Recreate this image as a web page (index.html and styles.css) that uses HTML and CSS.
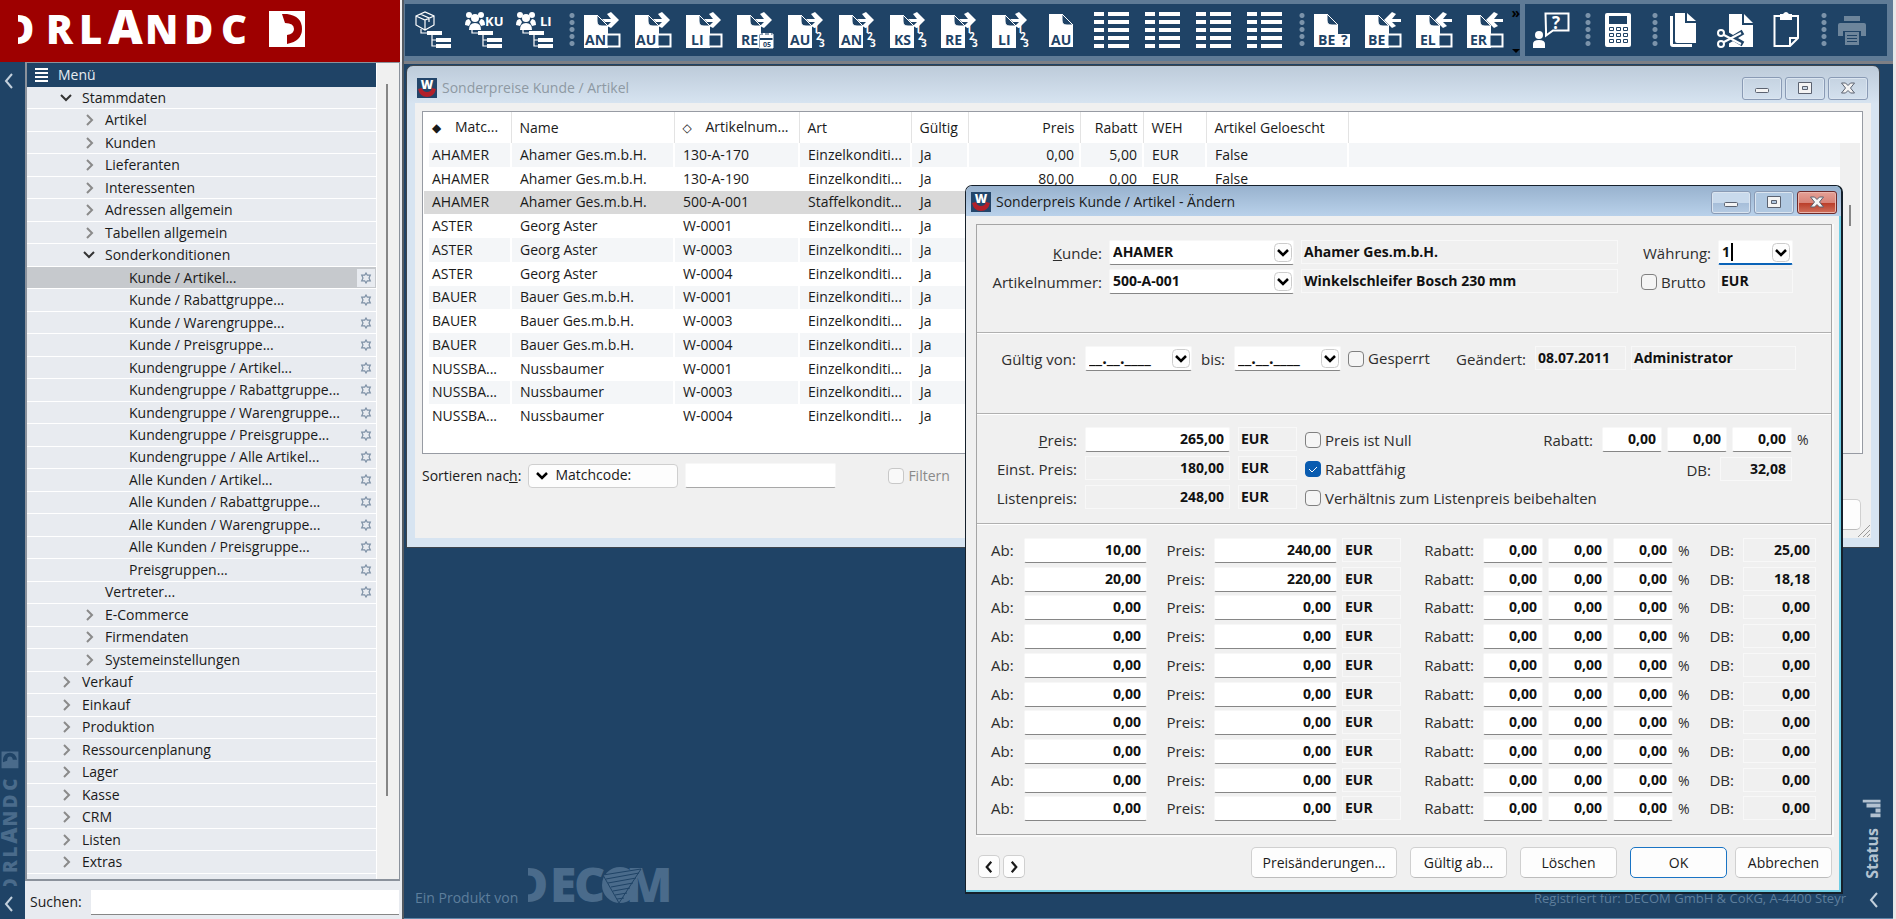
FILE: index.html
```
<!DOCTYPE html>
<html lang="de">
<head>
    <meta charset="UTF-8">
    <meta name="viewport" content="width=device-width, initial-scale=1.0">
    <title>Orlando - Sonderpreise Kunde / Artikel</title>
    <link rel="stylesheet" href="styles.css">
</head>
<body>
    <!-- shared icons -->
    <svg class="defs" aria-hidden="true">
        <clipPath id="cut-o"><path d="M0 0h30v40H0z" /></clipPath>
        <symbol id="i-logo" viewBox="0 0 290 40">
            <text class="logo-text" x="-13" y="36" clip-path="url(#cut-o)">D</text>
            <text class="logo-text" x="28" y="36">R</text>
            <text class="logo-text" x="61" y="36">L</text>
            <text class="logo-text logo-a" x="90" y="36">A</text>
            <text class="logo-text" x="127" y="36">N</text>
            <text class="logo-text" x="166" y="36">D</text>
            <text class="logo-text" x="203" y="36">C</text>
            <path fill-rule="evenodd" d="M251 3h36v36h-36z M264 6h5q15 2 15 15 0 12-15 15v-9q7-1 7-6 0-6-9-6z" />
        </symbol>
        <symbol id="i-down" viewBox="0 0 12 12"><path class="line" d="M1 3l5 5 5-5" /></symbol>
        <symbol id="i-right" viewBox="0 0 12 12"><path class="line" d="M4 1l5 5-5 5" /></symbol>
        <symbol id="i-left" viewBox="0 0 12 16"><path class="line" d="M9 1L3 8l6 7" /></symbol>
        <symbol id="i-gear" viewBox="0 0 12 12"><path class="line thin" d="M6 1l1.3 2.2h3L9 6l1.3 2.8h-3L6 11 4.700 8.800h-3L3 6 1.700 3.200h3z" /></symbol>
        <symbol id="i-app" viewBox="0 0 20 20">
            <path fill="#23456a" d="M0 0h20v20H0z" />
            <path fill="#b3202a" d="M1 11q2 8 9 8t9-8l-4-1q-1 4-5 4t-5-4z" />
            <text x="10" y="11" class="app-w">W</text>
        </symbol>
        <symbol id="i-page" viewBox="0 0 38 38"><path d="M1 4h13v6q0 5 5 5h6v22H1z" /><path d="M14 4l11 11h-6q-5 0-5-5z" class="fold" /></symbol>
        <symbol id="i-out" viewBox="0 0 38 38"><path d="M19 8h9L24 3l4-2 8 8-8 8-4-2 4-4h-6z" /></symbol>
        <symbol id="i-in" viewBox="0 0 38 38"><path d="M37 8h-9l4-5-4-2-8 8 8 8 4-2-4-4h9z" /></symbol>
        <symbol id="i-box" viewBox="0 0 38 38"><path class="box" d="M23.500 23.500h13v12h-13z" /></symbol>
        <symbol id="i-123" viewBox="0 0 38 38"><text class="count" x="26 29 32" y="22 29 36">123</text></symbol>
        <symbol id="i-tree" viewBox="0 0 38 38">
            <path d="M13 20h15v4H13zM22 27h15v4H22zM22 33h15v4H22z" />
            <path class="line thin" d="M7 18v4h6M18 24v5h4M18 24v11h4" />
        </symbol>
        <symbol id="i-people" viewBox="0 0 38 38">
            <circle cx="4" cy="4" r="3" /><circle cx="16" cy="4" r="3" /><circle cx="10" cy="7" r="4" />
            <path d="M0 14q0-6 4-6l2 3-2 4zM20 14q0-6-4-6l-2 3 2 4zM4 19q0-7 6-7t6 7z" />
        </symbol>
        <symbol id="i-list" viewBox="0 0 38 38"><path d="M1 1h10v4H1zM15 1h21v4H15zM1 9h10v4H1zM15 9h21v4H15zM1 17h10v4H1zM15 17h21v4H15zM1 25h10v4H1zM15 25h21v4H15zM1 33h10v4H1zM15 33h21v4H15z" /></symbol>
        <symbol id="i-min" viewBox="0 0 16 14"><rect class="glyph" x="1.500" y="7.500" width="13" height="4" rx="1" /></symbol>
        <symbol id="i-max" viewBox="0 0 16 14"><path class="glyph" fill-rule="evenodd" d="M1.500 1.500h13v11h-13zM5.500 5.500v3h5v-3z" /></symbol>
        <symbol id="i-x" viewBox="0 0 16 14"><path class="glyph" d="M1.500 2h4L8 4.500 10.500 2h4L10.500 7l4 5h-4L8 9.500 5.500 12h-4l4-5z" /></symbol>
    </svg>

    <aside class="sidebar">
        <header class="brand"><svg role="img" aria-label="Orlando"><use href="#i-logo" /></svg></header>
        <div class="sidebar-body">
            <div class="rail">
                <button class="rail-btn" aria-label="Einklappen"><svg><use href="#i-left" /></svg></button>
                <svg class="rail-logo" viewBox="0 0 20 140"><use href="#i-logo" x="0" y="0" width="136" height="19" transform="translate(0 137) rotate(-90)" /></svg>
                <button class="rail-btn" aria-label="Einklappen"><svg><use href="#i-left" /></svg></button>
            </div>
            <div class="menu">
                <nav class="tree-box">
                    <div class="tree">
                        <h2 class="tree-title"><svg viewBox="0 0 13 14"><path d="M0 0h13v2H0zM0 4h13v2H0zM0 8h13v2H0zM0 12h13v2H0z" /></svg>Menü</h2>
                        <ul>
                            <li class="l1 open"><svg><use href="#i-down" /></svg><a href="#">Stammdaten</a></li>
                            <li class="l2"><svg><use href="#i-right" /></svg><a href="#">Artikel</a></li>
                            <li class="l2"><svg><use href="#i-right" /></svg><a href="#">Kunden</a></li>
                            <li class="l2"><svg><use href="#i-right" /></svg><a href="#">Lieferanten</a></li>
                            <li class="l2"><svg><use href="#i-right" /></svg><a href="#">Interessenten</a></li>
                            <li class="l2"><svg><use href="#i-right" /></svg><a href="#">Adressen allgemein</a></li>
                            <li class="l2"><svg><use href="#i-right" /></svg><a href="#">Tabellen allgemein</a></li>
                            <li class="l2 open"><svg><use href="#i-down" /></svg><a href="#">Sonderkonditionen</a></li>
                            <li class="l3 selected"><a href="#">Kunde / Artikel...</a><svg class="gear"><use href="#i-gear" /></svg></li>
                            <li class="l3"><a href="#">Kunde / Rabattgruppe...</a><svg class="gear"><use href="#i-gear" /></svg></li>
                            <li class="l3"><a href="#">Kunde / Warengruppe...</a><svg class="gear"><use href="#i-gear" /></svg></li>
                            <li class="l3"><a href="#">Kunde / Preisgruppe...</a><svg class="gear"><use href="#i-gear" /></svg></li>
                            <li class="l3"><a href="#">Kundengruppe / Artikel...</a><svg class="gear"><use href="#i-gear" /></svg></li>
                            <li class="l3"><a href="#">Kundengruppe / Rabattgruppe...</a><svg class="gear"><use href="#i-gear" /></svg></li>
                            <li class="l3"><a href="#">Kundengruppe / Warengruppe...</a><svg class="gear"><use href="#i-gear" /></svg></li>
                            <li class="l3"><a href="#">Kundengruppe / Preisgruppe...</a><svg class="gear"><use href="#i-gear" /></svg></li>
                            <li class="l3"><a href="#">Kundengruppe / Alle Artikel...</a><svg class="gear"><use href="#i-gear" /></svg></li>
                            <li class="l3"><a href="#">Alle Kunden / Artikel...</a><svg class="gear"><use href="#i-gear" /></svg></li>
                            <li class="l3"><a href="#">Alle Kunden / Rabattgruppe...</a><svg class="gear"><use href="#i-gear" /></svg></li>
                            <li class="l3"><a href="#">Alle Kunden / Warengruppe...</a><svg class="gear"><use href="#i-gear" /></svg></li>
                            <li class="l3"><a href="#">Alle Kunden / Preisgruppe...</a><svg class="gear"><use href="#i-gear" /></svg></li>
                            <li class="l3"><a href="#">Preisgruppen...</a><svg class="gear"><use href="#i-gear" /></svg></li>
                            <li class="leaf"><a href="#">Vertreter...</a><svg class="gear"><use href="#i-gear" /></svg></li>
                            <li class="l2"><svg><use href="#i-right" /></svg><a href="#">E-Commerce</a></li>
                            <li class="l2"><svg><use href="#i-right" /></svg><a href="#">Firmendaten</a></li>
                            <li class="l2"><svg><use href="#i-right" /></svg><a href="#">Systemeinstellungen</a></li>
                            <li class="l1"><svg><use href="#i-right" /></svg><a href="#">Verkauf</a></li>
                            <li class="l1"><svg><use href="#i-right" /></svg><a href="#">Einkauf</a></li>
                            <li class="l1"><svg><use href="#i-right" /></svg><a href="#">Produktion</a></li>
                            <li class="l1"><svg><use href="#i-right" /></svg><a href="#">Ressourcenplanung</a></li>
                            <li class="l1"><svg><use href="#i-right" /></svg><a href="#">Lager</a></li>
                            <li class="l1"><svg><use href="#i-right" /></svg><a href="#">Kasse</a></li>
                            <li class="l1"><svg><use href="#i-right" /></svg><a href="#">CRM</a></li>
                            <li class="l1"><svg><use href="#i-right" /></svg><a href="#">Listen</a></li>
                            <li class="l1"><svg><use href="#i-right" /></svg><a href="#">Extras</a></li>
                        </ul>
                    </div>
                    <div class="tree-scroll"></div>
                </nav>
                <div class="search">
                    <label for="search">Suchen:</label>
                    <input id="search" type="text">
                </div>
            </div>
        </div>
    </aside>

    <main class="main">
        <div class="toolbars">
            <div class="toolbar wide">
                <button aria-label="Artikel"><svg viewBox="0 0 38 38"><path class="line thin" d="M2 5l9-4 9 4v9l-9 5-9-5zM2 5l9 4 9-4M11 9v10M6 3l9 4v4" /><use href="#i-tree" /></svg></button>
                <button aria-label="Kunden"><svg viewBox="0 0 38 38"><use href="#i-people" /><text class="cap" x="20" y="15">KU</text><use href="#i-tree" /></svg></button>
                <button aria-label="Lieferanten"><svg viewBox="0 0 38 38"><use href="#i-people" /><text class="cap" x="24" y="15">LI</text><use href="#i-tree" /></svg></button>
                <span class="dots"></span>
                <button><svg viewBox="0 0 38 38"><use href="#i-page" /><text class="doc" x="2" y="34">AN</text><use href="#i-out" /><use href="#i-box" /></svg></button>
                <button><svg viewBox="0 0 38 38"><use href="#i-page" /><text class="doc" x="2" y="34">AU</text><use href="#i-out" /><use href="#i-box" /></svg></button>
                <button><svg viewBox="0 0 38 38"><use href="#i-page" /><text class="doc" x="6" y="34">LI</text><use href="#i-out" /><use href="#i-box" /></svg></button>
                <button><svg viewBox="0 0 38 38"><use href="#i-page" /><text class="doc" x="5" y="34">RE</text><use href="#i-out" /><path class="fold" d="M23 23h14v14H23z" /><path d="M24 24h3v-2h2v2h4v-2h2v2h2v3H24zM24 29h13v8H24z" /><text class="day" x="27" y="36">05</text></svg></button>
                <button><svg viewBox="0 0 38 38"><use href="#i-page" /><text class="doc" x="3" y="34">AU</text><use href="#i-out" /><use href="#i-123" /></svg></button>
                <button><svg viewBox="0 0 38 38"><use href="#i-page" /><text class="doc" x="3" y="34">AN</text><use href="#i-out" /><use href="#i-123" /></svg></button>
                <button><svg viewBox="0 0 38 38"><use href="#i-page" /><text class="doc" x="5" y="34">KS</text><use href="#i-out" /><use href="#i-123" /></svg></button>
                <button><svg viewBox="0 0 38 38"><use href="#i-page" /><text class="doc" x="5" y="34">RE</text><use href="#i-out" /><use href="#i-123" /></svg></button>
                <button><svg viewBox="0 0 38 38"><use href="#i-page" /><text class="doc" x="7" y="34">LI</text><use href="#i-out" /><use href="#i-123" /></svg></button>
                <button><svg viewBox="0 0 38 38"><use href="#i-page" x="6" y="-1" /><text class="doc" x="9" y="34">AU</text></svg></button>
                <button aria-label="Liste 1"><svg><use href="#i-list" /></svg></button>
                <button aria-label="Liste 2"><svg><use href="#i-list" /></svg></button>
                <button aria-label="Liste 3"><svg><use href="#i-list" /></svg></button>
                <button aria-label="Liste 4"><svg><use href="#i-list" /></svg></button>
                <span class="dots"></span>
                <button><svg viewBox="0 0 38 38"><use href="#i-page" y="-1" /><text class="doc" x="5" y="34">BE</text><path d="M25 23h12v13H25z" /><text class="doc" x="28" y="34">?</text></svg></button>
                <button><svg viewBox="0 0 38 38"><use href="#i-page" /><text class="doc" x="4" y="34">BE</text><use href="#i-in" /><use href="#i-box" /></svg></button>
                <button><svg viewBox="0 0 38 38"><use href="#i-page" /><text class="doc" x="5" y="34">EL</text><use href="#i-in" /><use href="#i-box" /></svg></button>
                <button><svg viewBox="0 0 38 38"><use href="#i-page" /><text class="doc" x="4" y="34">ER</text><use href="#i-in" /><use href="#i-box" /></svg></button>
                <span class="more"><b>»</b><i></i></span>
            </div>
            <div class="toolbar">
                <button aria-label="Hilfe"><svg viewBox="0 0 38 38"><path class="line" d="M13.500 2.500h23v17H21l-7 5v-5z" /><text class="help" x="20" y="18">?</text><circle cx="7" cy="24" r="4" /><path d="M1 37v-4q0-4 6-4t6 4v4z" /></svg></button>
                <span class="dots"></span>
                <button aria-label="Rechner"><svg viewBox="0 0 38 38"><path fill-rule="evenodd" d="M8 2h22q2 0 2 2v30q0 2-2 2H8q-2 0-2-2V4q0-2 2-2zM10 5v8h18V5z" /><path class="keys" d="M10.500 16.500h4v3h-4zM17.500 16.500h4v3h-4zM24.500 16.500h4v3h-4zM10.500 22.500h4v3h-4zM17.500 22.500h4v3h-4zM24.500 22.500h4v3h-4zM10.500 28.500h4v3h-4zM17.500 28.500h4v3h-4zM24.500 28.500h4v3h-4z" /></svg></button>
                <span class="dots"></span>
                <button aria-label="Kopieren"><svg viewBox="0 0 38 38"><path d="M4 5h3v28h19v3H7q-3 0-3-3z" /><path d="M9 2h10v10h11v20H11q-2 0-2-2zM21 2l9 8h-9z" /></svg></button>
                <button aria-label="Ausschneiden"><svg viewBox="0 0 38 38"><path d="M12 3h13v11h11v22H12z" /><path d="M27 3l9 9h-9z" /><path class="cut" d="M6 21l20 12M6 33l20-12" /><path class="line" d="M7 24l17 9M7 31l17-9" /><circle class="ring" cx="4" cy="22" r="3" /><circle class="ring" cx="4" cy="33" r="3" /></svg></button>
                <button aria-label="Einfügen"><svg viewBox="0 0 38 38"><path class="line" d="M12 5H6.500v30H22l8-8V5h-6M22 35v-8h8" /><path d="M12 3h3q3-4 6 0h3v6H12z" /></svg></button>
                <span class="dots"></span>
                <button aria-label="Drucken" disabled><svg viewBox="0 0 38 38"><path d="M9 5h16v5H9zM5 12h24q2 0 2 2v11h-5v-5H8v5H3V14q0-2 2-2z" /><path fill-rule="evenodd" d="M10 21h14v13H10zM12 24v1h10v-1zM12 27v1h10v-1zM12 30v1h10v-1z" /></svg></button>
            </div>
        </div>

        <div class="desktop">
            <!-- list window -->
            <section class="window list-window">
                <header class="titlebar">
                    <svg class="app-icon"><use href="#i-app" /></svg>
                    <h1>Sonderpreise Kunde / Artikel</h1>
                    <button aria-label="Minimieren"><svg><use href="#i-min" /></svg></button>
                    <button aria-label="Maximieren"><svg><use href="#i-max" /></svg></button>
                    <button aria-label="Schließen"><svg><use href="#i-x" /></svg></button>
                </header>
                <div class="list-body">
                    <div class="grid-box">
                        <table class="prices">
                            <colgroup><col class="c-pad"><col class="c-match"><col class="c-name"><col class="c-art"><col class="c-kind"><col class="c-valid"><col class="c-price"><col class="c-disc"><col class="c-cur"><col class="c-del"><col></colgroup>
                            <thead>
                                <tr><th></th><th><span class="sort">◆</span>Matc...</th><th>Name</th><th><span class="sort">◇</span>Artikelnum...</th><th>Art</th><th>Gültig</th><th class="num-col">Preis</th><th class="num-col">Rabatt</th><th>WEH</th><th>Artikel Geloescht</th><th></th></tr>
                            </thead>
                            <tbody>
                                <tr><td></td><td>AHAMER</td><td>Ahamer Ges.m.b.H.</td><td>130-A-170</td><td>Einzelkonditi...</td><td>Ja</td><td class="num-col">0,00</td><td class="num-col">5,00</td><td>EUR</td><td>False</td><td></td></tr>
                                <tr><td></td><td>AHAMER</td><td>Ahamer Ges.m.b.H.</td><td>130-A-190</td><td>Einzelkonditi...</td><td>Ja</td><td class="num-col">80,00</td><td class="num-col">0,00</td><td>EUR</td><td>False</td><td></td></tr>
                                <tr class="selected"><td></td><td>AHAMER</td><td>Ahamer Ges.m.b.H.</td><td>500-A-001</td><td>Staffelkondit...</td><td>Ja</td><td></td><td></td><td></td><td></td><td></td></tr>
                                <tr><td></td><td>ASTER</td><td>Georg Aster</td><td>W-0001</td><td>Einzelkonditi...</td><td>Ja</td><td></td><td></td><td></td><td></td><td></td></tr>
                                <tr><td></td><td>ASTER</td><td>Georg Aster</td><td>W-0003</td><td>Einzelkonditi...</td><td>Ja</td><td></td><td></td><td></td><td></td><td></td></tr>
                                <tr><td></td><td>ASTER</td><td>Georg Aster</td><td>W-0004</td><td>Einzelkonditi...</td><td>Ja</td><td></td><td></td><td></td><td></td><td></td></tr>
                                <tr><td></td><td>BAUER</td><td>Bauer Ges.m.b.H.</td><td>W-0001</td><td>Einzelkonditi...</td><td>Ja</td><td></td><td></td><td></td><td></td><td></td></tr>
                                <tr><td></td><td>BAUER</td><td>Bauer Ges.m.b.H.</td><td>W-0003</td><td>Einzelkonditi...</td><td>Ja</td><td></td><td></td><td></td><td></td><td></td></tr>
                                <tr><td></td><td>BAUER</td><td>Bauer Ges.m.b.H.</td><td>W-0004</td><td>Einzelkonditi...</td><td>Ja</td><td></td><td></td><td></td><td></td><td></td></tr>
                                <tr><td></td><td>NUSSBA...</td><td>Nussbaumer</td><td>W-0001</td><td>Einzelkonditi...</td><td>Ja</td><td></td><td></td><td></td><td></td><td></td></tr>
                                <tr><td></td><td>NUSSBA...</td><td>Nussbaumer</td><td>W-0003</td><td>Einzelkonditi...</td><td>Ja</td><td></td><td></td><td></td><td></td><td></td></tr>
                                <tr><td></td><td>NUSSBA...</td><td>Nussbaumer</td><td>W-0004</td><td>Einzelkonditi...</td><td>Ja</td><td></td><td></td><td></td><td></td><td></td></tr>
                            </tbody>
                        </table>
                        <div class="grid-scroll"></div>
                    </div>
                    <div class="sort-row">
                        <label for="sort">Sortieren nac<u>h</u>:</label>
                        <select id="sort"><option>Matchcode:</option></select>
                        <input type="text" class="field" aria-label="Suchbegriff">
                        <label class="check disabled"><input type="checkbox" disabled>Filtern</label>
                    </div>
                    <div class="list-foot">
                        <button class="btn" aria-label="Schließen"></button>
                        <svg class="grip" viewBox="0 0 14 14"><path d="M1 13L13 1M6 13l7-7M10 13l3-3" /></svg>
                    </div>
                </div>
            </section>

            <footer class="watermark">
                <span>Ein Produkt von</span>
                <svg viewBox="0 0 142 38" role="img" aria-label="DECOM">
                    <text class="decom" x="-15" y="36" clip-path="url(#cut-o)">D</text>
                    <text class="decom" x="22" y="36">E</text>
                    <text class="decom" x="46" y="36">C</text>
                    <text class="decom" x="98" y="36">M</text>
                    <circle cx="92" cy="19" r="18" />
                    <path class="cone" d="M75 9l38-6-22 34z" />
                    <path class="cone-line" d="M78 13l33-6M80 17l28-5M83 21l22-4M85 25l17-3M87 29l12-2M89 33l7-1" />
                </svg>
                <span class="licence">Registriert für: DECOM GmbH &amp; CoKG, A-4400 Steyr</span>
            </footer>
            <div class="status">
                <svg class="bars" viewBox="0 0 18 19"><path d="M0 8h4v10H0zM5 13h4v5H5zM10 4h4v14h-4zM15 0h3v18h-3z" /></svg>
                <b>Status</b>
                <button class="rail-btn" aria-label="Status ausklappen"><svg><use href="#i-left" /></svg></button>
            </div>

            <!-- edit dialog -->
            <form class="window dialog">
                <header class="titlebar">
                    <svg class="app-icon"><use href="#i-app" /></svg>
                    <h1>Sonderpreis Kunde / Artikel - Ändern</h1>
                    <button type="button" aria-label="Minimieren"><svg><use href="#i-min" /></svg></button>
                    <button type="button" class="dim" aria-label="Maximieren"><svg><use href="#i-max" /></svg></button>
                    <button type="button" class="close" aria-label="Schließen"><svg><use href="#i-x" /></svg></button>
                </header>
                <div class="dialog-body">
                    <div class="panel">
                        <div class="part part-head">
                            <label for="kunde"><u>K</u>unde:</label>
                            <select id="kunde" class="field"><option>AHAMER</option></select>
                            <output class="ro">Ahamer Ges.m.b.H.</output>
                            <label for="waehrung">Währung:</label>
                            <span class="combo focus"><input id="waehrung" type="text" value="1"><i class="caret"></i><button type="button" aria-label="Währung wählen"></button></span>
                            <label for="artikel">Artikelnummer:</label>
                            <select id="artikel" class="field"><option>500-A-001</option></select>
                            <output class="ro">Winkelschleifer Bosch 230 mm</output>
                            <label class="check brutto"><input type="checkbox">Brutto</label>
                            <output class="ro">EUR</output>
                        </div>
                        <div class="part part-dates">
                            <label class="lead" for="von">Gültig von:</label>
                            <span class="combo date"><input id="von" type="text" value="__.__.____"><button type="button" aria-label="Datum wählen"></button></span>
                            <label for="bis">bis:</label>
                            <span class="combo date"><input id="bis" type="text" value="__.__.____"><button type="button" aria-label="Datum wählen"></button></span>
                            <label class="check"><input type="checkbox">Gesperrt</label>
                            <span class="changed">Geändert:</span>
                            <output class="ro ro-date">08.07.2011</output>
                            <output class="ro ro-user">Administrator</output>
                        </div>
                        <div class="part part-price">
                            <div class="base">
                                <label for="preis"><u>P</u>reis:</label><input id="preis" class="field num" type="text" value="265,00"><output class="ro">EUR</output><label class="check"><input type="checkbox">Preis ist Null</label>
                                <span>Einst. Preis:</span><output class="ro num">180,00</output><output class="ro">EUR</output><label class="check"><input type="checkbox" checked>Rabattfähig</label>
                                <span>Listenpreis:</span><output class="ro num">248,00</output><output class="ro">EUR</output><label class="check"><input type="checkbox">Verhältnis zum Listenpreis beibehalten</label>
                            </div>
                            <div class="discount">
                                <div><label for="rabatt">Rabatt:</label><input id="rabatt" class="field num" type="text" value="0,00"><input class="field num" type="text" value="0,00" aria-label="Rabatt 2"><input class="field num" type="text" value="0,00" aria-label="Rabatt 3"><span class="pct">%</span></div>
                                <div class="db"><span>DB:</span><output class="ro num">32,08</output></div>
                            </div>
                        </div>
                        <div class="part part-tiers" id="tiers"></div>
                    </div>
                    <div class="actions">
                        <button type="button" class="btn step" aria-label="Vorheriger"><svg><use href="#i-left" /></svg></button>
                        <button type="button" class="btn step" aria-label="Nächster"><svg class="flip"><use href="#i-left" /></svg></button>
                        <button type="button" class="btn long">Preisänderungen...</button>
                        <button type="button" class="btn">Gültig ab...</button>
                        <button type="button" class="btn">Löschen</button>
                        <button type="submit" class="btn primary">OK</button>
                        <button type="button" class="btn last">Abbrechen</button>
                    </div>
                </div>
            </form>
        </div>
    </main>

    <!-- one row of the price scale -->
    <template id="tier">
        <div class="tier">
            <label class="ab-label">Ab:</label><input class="field num ab" type="text">
            <label class="preis-label">Preis:</label><input class="field num preis" type="text"><output class="ro">EUR</output>
            <label class="rabatt-label">Rabatt:</label><input class="field num rabatt" type="text" value="0,00"><input class="field num" type="text" value="0,00" aria-label="Rabatt 2"><input class="field num" type="text" value="0,00" aria-label="Rabatt 3"><span class="pct">%</span>
            <span class="db-label">DB:</span><output class="ro num db-value"></output>
        </div>
    </template>
    <script src="script.js"></script>
</body>
</html>
```
FILE: script.js
```
// from quantity, price, margin
const tiers = [
    ['10,00', '240,00', '25,00'],
    ['20,00', '220,00', '18,18']
];

// the scale always has ten rows
while (tiers.length < 10) {
    tiers.push(['0,00', '0,00', '0,00']);
}

const template = document.querySelector('#tier');
const container = document.querySelector('#tiers');

tiers.forEach(function(tier, i) {
    const row = template.content.cloneNode(true);

    row.querySelector('.ab').value = tier[0];
    row.querySelector('.preis').value = tier[1];
    row.querySelector('.db-value').textContent = tier[2];

    // tie the labels to their inputs
    ['ab', 'preis', 'rabatt'].forEach(function(name) {
        row.querySelector('.' + name).id = name + '-' + i;
        row.querySelector('.' + name + '-label').htmlFor = name + '-' + i;
    });

    container.appendChild(row);
});
```
FILE: styles.css
```
* {
    box-sizing: border-box;
}

body {
    margin: 0;
    height: 100vh;
    display: flex;
    overflow: hidden;
    background: #1f4366;
    font-family: "Open Sans", "Noto Sans", sans-serif;
    font-size: 14px;
    line-height: 20px;
    color: #1a1a1a;
}

button, input, select, output {
    font: inherit;
    color: inherit;
}

button {
    padding: 0;
    border: 0;
    background: none;
}

h1, h2, ul {
    margin: 0;
    padding: 0;
    font-size: inherit;
    font-weight: normal;
}

svg {
    display: block;
    flex: none;
}

.defs {
    position: absolute;
    width: 0;
    height: 0;
}

.line {
    fill: none;
    stroke: currentColor;
    stroke-width: var(--stroke, 2);
}

.thin {
    stroke-width: 1.2;
}

/* sidebar */

.sidebar {
    flex: 0 0 404px;
    display: flex;
    flex-direction: column;
    background: #f0f0f0;
    border-right: 2px solid #555b62;
}

.brand {
    height: 62px;
    margin-right: 2px;
    padding: 8px 18px;
    background: #9e0000;
}

.brand svg {
    width: 290px;
    height: 40px;
    fill: #fff;
}

.logo-text {
    font-weight: 800;
    font-size: 40px;
}

.logo-a {
    font-size: 48px;
}

.sidebar-body {
    flex: 1;
    display: flex;
    min-height: 0;
}

.rail {
    width: 25px;
    display: flex;
    flex-direction: column;
    padding: 10px 0 6px;
    background: #1f4366;
}

.rail-btn {
    height: 18px;
    padding-left: 3px;
    color: #c3d0dc;
}

.rail-btn svg {
    width: 12px;
    height: 16px;
}

.rail-logo {
    width: 20px;
    height: 140px;
    margin: auto 0 6px;
    fill: #4a6b8b;
}

.menu {
    flex: 1;
    display: flex;
    flex-direction: column;
    background: #e8ebf0;
}

.tree-box {
    flex: 1;
    display: flex;
    min-height: 0;
    margin-right: 2px;
    border: 2px solid #8b929c;
    border-top-width: 1px;
    border-right-width: 1px;
    background: #f0f0f0;
}

.tree {
    flex: 1;
    display: flex;
    flex-direction: column;
    padding-bottom: 5px;
    border-right: 1px solid #fff;
    background: #e8ebf0;
}

.tree-title {
    display: flex;
    align-items: center;
    gap: 10px;
    height: 24px;
    padding-left: 8px;
    background: #1f4366;
    color: #e6ecf2;
}

.tree-title svg {
    width: 13px;
    height: 14px;
    fill: #fff;
}

.tree ul {
    flex: 1;
    display: flex;
    flex-direction: column;
    list-style: none;
}

.tree li {
    flex: 1;
    display: flex;
    align-items: center;
    gap: 10px;
    min-height: 0;
    padding-right: 4px;
    border-bottom: 1px solid #fff;
    color: #8a8a8a;
}

.tree li svg {
    width: 12px;
    height: 12px;
}

.tree li.open {
    color: #333;
}

.tree a {
    color: #1a1a1a;
    text-decoration: none;
}

.l1 {
    padding-left: 33px;
}

.l2 {
    padding-left: 56px;
}

.leaf {
    padding-left: 78px;
}

.l3 {
    padding-left: 102px;
}

.tree .selected {
    background: #c6c9cd;
}

.tree li .gear {
    margin-left: auto;
    color: #7d90a5;
}

.tree .selected .gear {
    outline: 3px solid #e8ebf0;
    background: #e8ebf0;
}

.tree-scroll {
    width: 22px;
    padding: 21px 0 83px 9px;
}

.tree-scroll::before {
    content: "";
    display: block;
    width: 2px;
    height: 100%;
    background: #868686;
}

.search {
    display: flex;
    align-items: center;
    gap: 9px;
    height: 38px;
    padding: 4px 3px 0 5px;
}

.search input {
    flex: 1;
    min-width: 0;
    height: 25px;
    border: 0;
    border-bottom: 1px solid #868686;
    background: #fff;
}

/* toolbars */

.main {
    flex: 1;
    display: flex;
    flex-direction: column;
    min-width: 0;
    border-right: 3px solid #e8e8e8;
}

.toolbars {
    display: flex;
    gap: 5px;
    height: 64px;
    padding: 4px 6px 5px 1px;
    background: #5f7b96;
    border-bottom: 3px solid #7d7f85;
}

.toolbar {
    display: flex;
    align-items: center;
    height: 52px;
    overflow: hidden;
    flex: 0 0 362px;
    background: #1f4366;
}

.toolbar.wide {
    flex: 1;
    padding-left: 2px;
}

.toolbar button {
    flex: 0 0 51px;
    display: flex;
    justify-content: center;
}

.toolbar svg {
    width: 38px;
    height: 38px;
    fill: #fff;
    color: #fff;
}

.toolbar button:disabled {
    opacity: 0.35;
}

.dots {
    flex: 0 0 16px;
    height: 36px;
    background: radial-gradient(circle, #7b93aa 2px, transparent 3px) right 1px top 0 / 6px 7px repeat-y;
}

.fold {
    fill: #1f4366;
    stroke: #fff;
    stroke-width: 1;
}

.box {
    fill: #1f4366;
    stroke: #fff;
    stroke-width: 2;
}

.cap {
    font-size: 13px;
    font-weight: 700;
}

.doc {
    font-size: 14px;
    font-weight: 700;
    fill: #1f4366;
}

.count {
    font-size: 10px;
    font-weight: 700;
}

.day {
    font-size: 7px;
    font-weight: 700;
    fill: #1f4366;
}

.help {
    font-size: 17px;
    font-weight: 700;
}

.keys {
    fill: #fff;
    stroke: #1f4366;
}

.cut {
    stroke: #1f4366;
    stroke-width: 5;
}

.ring {
    fill: #1f4366;
    stroke: #fff;
    stroke-width: 2;
}

.more {
    flex: 1;
    height: 46px;
    display: flex;
    flex-direction: column;
    align-items: flex-end;
    justify-content: space-between;
    line-height: 12px;
    color: #000;
}

.more i {
    border: 4px solid transparent;
    border-top-color: #000;
    border-bottom: 0;
}

/* windows */

.desktop {
    flex: 1;
    position: relative;
    background: #1f4366;
    border-bottom: 1px solid #5f86a8;
}

.window {
    position: absolute;
    display: flex;
    flex-direction: column;
    border: 1px solid #3d444c;
    border-radius: 7px 7px 0 0;
}

.titlebar {
    display: flex;
    align-items: center;
    gap: 3px;
}

.titlebar h1 {
    flex: 1;
    margin-left: 2px;
}

.app-icon {
    width: 20px;
    height: 20px;
}

.app-w {
    font-size: 12px;
    font-weight: 800;
    fill: #fff;
    text-anchor: middle;
}

.titlebar button {
    width: 40px;
    height: 23px;
    display: flex;
    align-items: center;
    justify-content: center;
    border: 1px solid #8a9bb5;
    border-radius: 3px;
    box-shadow: inset 0 0 0 1px #dbe5f0;
}

.titlebar button svg {
    width: 16px;
    height: 14px;
}

.glyph {
    fill: #f4f4f4;
    stroke: #5b6270;
}

.list-window {
    top: 1px;
    left: 2px;
    right: 13px;
    height: 483px;
    padding: 0 8px 9px;
    background: linear-gradient(#bdcbda, #d7e4f1 38px);
}

.list-window .titlebar {
    height: 37px;
    padding: 7px 3px 0 2px;
    color: #8e99a3;
}

.list-body {
    flex: 1;
    display: flex;
    flex-direction: column;
    padding: 8px 0 0 7px;
    background: #f0f0f0;
}

.grid-box {
    display: flex;
    height: 343px;
    margin-right: 8px;
    padding: 0 2px 0 1px;
    border: 1px solid #979ba3;
    background: #fff;
}

.grid-scroll {
    flex: 0 0 20px;
    margin-top: 31px;
    padding: 62px 0 0 9px;
    background: #f0f0f0;
}

.grid-scroll::before {
    content: "";
    display: block;
    width: 2px;
    height: 21px;
    background: #868686;
}

.prices {
    flex: 1;
    table-layout: fixed;
    height: 316px;
    border-collapse: collapse;
}

.prices th {
    height: 31px;
    padding: 0 0 0 8px;
    border-right: 1px solid #e3e3e3;
    font-weight: normal;
    text-align: left;
    white-space: nowrap;
}

.prices td {
    padding: 0 0 0 8px;
    border-right: 2px solid #fff;
    white-space: nowrap;
}

.prices th:nth-child(2), .prices td:nth-child(2) {
    padding-left: 3px;
}

.prices th:first-child, .prices td:first-child, .prices th:last-child, .prices td:last-child {
    padding: 0;
    border: 0;
}

.prices tbody tr:nth-child(odd) td:not(:first-child) {
    background: #f4f6f8;
}

.prices tbody tr.selected td:nth-child(n) {
    background: #d9d9d9;
    border-color: #d9d9d9;
}

.prices .num-col {
    padding: 0 5px 0 0;
    text-align: right;
}

.sort {
    display: inline-block;
    width: 23px;
    font-family: "DejaVu Sans", sans-serif;
    font-size: 12px;
}

.c-pad { width: 5px; }
.c-match { width: 82px; }
.c-name { width: 163px; }
.c-art { width: 125px; }
.c-kind { width: 112px; }
.c-valid { width: 57px; }
.c-price { width: 112px; }
.c-disc { width: 63px; }
.c-cur { width: 63px; }
.c-del { width: 142px; }

/* form controls */

.field, .combo {
    height: 25px;
    padding: 0 5px 2px 3px;
    border: 1px solid #f7f7f7;
    border-bottom: 1px solid #868686;
    border-radius: 2px;
    background-color: #fff;
}

.ro {
    height: 24px;
    padding: 0 5px 0 2px;
    border: 1px solid #f8f8f8;
    line-height: 21px;
    white-space: nowrap;
}

.num {
    text-align: right;
    min-width: 0;
}

select.field {
    appearance: none;
    background: #fff url("data:image/svg+xml,%3Csvg xmlns='http://www.w3.org/2000/svg' width='18' height='19'%3E%3Crect x='.5' y='.5' width='17' height='18' rx='4' fill='%23fdfdfd' stroke='%23ccc'/%3E%3Cpath d='M4 7l5 5 5-5' fill='none' stroke='%23000' stroke-width='2.500'/%3E%3C/svg%3E") no-repeat right 1px top 2px;
}

.combo {
    display: flex;
    align-items: center;
    padding: 0 1px 0 3px;
}

.combo input {
    flex: 1;
    min-width: 0;
    padding: 0;
    border: 0;
    outline: 0;
    background: none;
}

.combo button {
    flex: 0 0 18px;
    height: 19px;
    margin-left: auto;
    background: url("data:image/svg+xml,%3Csvg xmlns='http://www.w3.org/2000/svg' width='18' height='19'%3E%3Crect x='.5' y='.5' width='17' height='18' rx='4' fill='%23fdfdfd' stroke='%23ccc'/%3E%3Cpath d='M4 7l5 5 5-5' fill='none' stroke='%23000' stroke-width='2.500'/%3E%3C/svg%3E") no-repeat;
}

.combo.focus {
    padding-right: 2px;
    border-bottom: 2px solid #0a63b8;
}

.combo.focus input {
    flex: 0 0 9px;
}

.caret {
    width: 2px;
    height: 18px;
    background: #000;
}

.check {
    display: flex;
    align-items: center;
    gap: 4px;
    white-space: nowrap;
}

.check input {
    appearance: none;
    flex: none;
    width: 16px;
    height: 16px;
    margin: 0;
    border: 1px solid #808080;
    border-radius: 4px;
    background: #f5f5f5;
}

.check input:checked {
    border-color: #0a5cb0;
    background: #0a5cb0 url("data:image/svg+xml,%3Csvg xmlns='http://www.w3.org/2000/svg' viewBox='0 0 14 14'%3E%3Cpath d='M3 7l3 3 5-5' fill='none' stroke='%23fff'/%3E%3C/svg%3E");
}

.check.disabled {
    color: #8a8a8a;
}

.check.disabled input {
    border-color: #c8c8c8;
    background: #f9f9f9;
}

.btn {
    width: 97px;
    height: 31px;
    border: 1px solid #d0d0d0;
    border-bottom-color: #bcbcbc;
    border-radius: 5px;
    background: #fdfdfd;
}

/* list window, lower part */

.sort-row {
    display: flex;
    align-items: center;
    gap: 7px;
    height: 27px;
    margin-top: 8px;
}

.sort-row select {
    appearance: none;
    width: 150px;
    height: 24px;
    padding: 0 0 2px 26px;
    border: 1px solid #cfcfcf;
    border-radius: 4px;
    background: #fdfdfd url("data:image/svg+xml,%3Csvg xmlns='http://www.w3.org/2000/svg' width='14' height='12'%3E%3Cpath d='M2 3l5 5 5-5' fill='none' stroke='%23000' stroke-width='2.500'/%3E%3C/svg%3E") no-repeat 6px 5px;
}

.sort-row .field {
    width: 151px;
    border-bottom-color: #a8a8a8;
}

.sort-row .check {
    margin-left: 45px;
}

.list-foot {
    display: flex;
    justify-content: flex-end;
    align-items: flex-end;
    flex: 1;
}

.list-foot .btn {
    margin: 0 -4px 8px 0;
}

.grip {
    width: 14px;
    height: 14px;
    stroke: #9a9a9a;
}

/* dialog */

.dialog {
    top: 121px;
    right: 50px;
    width: 878px;
    height: 709px;
    font-size: 15px;
    border-color: #15202b;
    border-right-width: 2px;
    border-bottom-width: 2px;
    box-shadow: inset -1px -1px 0 1px #6fcde4;
    background: #f0f0f0;
}

.dialog .titlebar {
    height: 30px;
    padding: 2px 4px 0 5px;
    border-radius: 6px 6px 0 0;
    background: linear-gradient(#98b2ce, #b9d1ea);
    font-size: 14px;
}

.dialog .titlebar button {
    background: linear-gradient(#c9daec 50%, #a5bdd8 50%, #b5cbe3);
}

.dialog .titlebar .dim {
    background: #b0c8e1;
}

.dialog .titlebar .close {
    border-color: #6e2a2a;
    background: linear-gradient(#e5a096, #d98478 50%, #b93a26 50%, #d0705c);
    box-shadow: inset 0 0 0 1px #eab5ac;
}

.dialog-body {
    flex: 1;
    display: flex;
    flex-direction: column;
    min-height: 0;
    padding: 8px 9px 14px 10px;
}

.panel {
    flex: 1;
    display: flex;
    flex-direction: column;
    border: 1px solid #a5a5a5;
    box-shadow: 1px 1px 0 1px #fafafa;
}

.part {
    border-bottom: 1px solid #b0b0b0;
    box-shadow: 0 1px 0 #fff;
}

.part label, .base > span, .changed, .discount span, .tier span {
    color: #2d2d2d;
}

.part .field, .part .combo, .part .ro {
    font-weight: 700;
    font-size: 14px;
    color: #111;
}

.part-head {
    display: grid;
    grid-template-columns: 125px 185px 1fr 86px 75px;
    grid-auto-rows: 25px;
    gap: 4px 7px;
    height: 108px;
    padding: 15px 38px 0 0;
}

.part-head > label:not(.check), .base > span, .base > label:not(.check) {
    text-align: right;
    line-height: 26px;
}

.brutto {
    padding-left: 16px;
}

.part-dates {
    display: flex;
    gap: 9px;
    height: 81px;
    padding: 13px 35px 0 0;
    line-height: 27px;
}

.part-dates .lead {
    width: 99px;
    text-align: right;
}

.part-dates .date {
    width: 107px;
    font-size: 16px;
}

.part-dates .check {
    height: 25px;
    margin-left: -2px;
}

.changed {
    margin-left: auto;
}

.ro-date {
    width: 91px;
}

.ro-user {
    width: 165px;
    margin-left: -4px;
}

.part-price {
    display: flex;
    height: 110px;
    padding: 13px 19px 0 0;
}

/* the last check label may run under the discount block */
.base {
    flex: 1;
    min-width: 0;
    display: grid;
    grid-template-columns: 100px 145px 59px minmax(0, 1fr);
    grid-auto-rows: 25px;
    gap: 4px 8px;
}

.discount div {
    display: flex;
    justify-content: flex-end;
    gap: 5px;
    margin-bottom: 4px;
    line-height: 26px;
}

.discount .field {
    width: 60px;
}

.discount label {
    margin-right: 4px;
}

.discount .db {
    gap: 9px;
    padding-right: 20px;
}

.discount .ro {
    width: 72px;
}

.part-tiers {
    flex: 1;
    display: grid;
    grid-template-rows: repeat(10, 1fr);
    padding: 14px 14px 9px;
    border: 0;
    box-shadow: none;
}

.tier {
    display: grid;
    grid-template-columns: 28px 123px 57px 123px 59px 72px 60px 60px 60px 15px 40px 73px;
    gap: 5px;
    align-items: start;
    line-height: 25px;
}

.preis-label, .rabatt-label, .db-label {
    padding-right: 4px;
    text-align: right;
}

.pct {
    width: 15px;
    font-size: 14px;
}

.actions {
    display: flex;
    align-items: flex-end;
    gap: 13px;
    margin-top: 12px;
    padding-left: 2px;
    font-size: 14px;
}

.btn.step {
    width: 22px;
    height: 23px;
    margin-right: -10px;
    padding: 0 5px;
}

.step svg {
    --stroke: 3;
    width: 10px;
    height: 12px;
}

.flip {
    transform: scaleX(-1);
}

.btn.long {
    width: 146px;
    margin-left: auto;
}

.btn.primary {
    border: 1px solid #1a74c4;
}

.btn.last {
    margin-left: -5px;
}

/* desktop background */

.watermark {
    position: absolute;
    left: 11px;
    right: 47px;
    bottom: 10px;
    display: flex;
    align-items: flex-end;
    gap: 10px;
    color: #5d7e9c;
}

.watermark svg {
    width: 142px;
    height: 38px;
    margin-bottom: 4px;
    fill: #4a6b8b;
}

.decom {
    font-weight: 800;
    font-size: 48px;
}

.cone {
    fill: #4a6b8b;
    stroke: #1f4366;
}

.cone-line {
    stroke: #1f4366;
}

.licence {
    margin-left: auto;
    font-size: 13px;
}

.status {
    position: absolute;
    right: 11px;
    bottom: 9px;
    display: flex;
    flex-direction: column;
    align-items: center;
    color: #b3c2d0;
    font-size: 16px;
}

.status b {
    margin: 10px 0 12px;
    writing-mode: vertical-rl;
    transform: rotate(180deg);
}

.bars {
    width: 18px;
    height: 19px;
    fill: #b3c2d0;
    transform: rotate(-90deg);
}
```
